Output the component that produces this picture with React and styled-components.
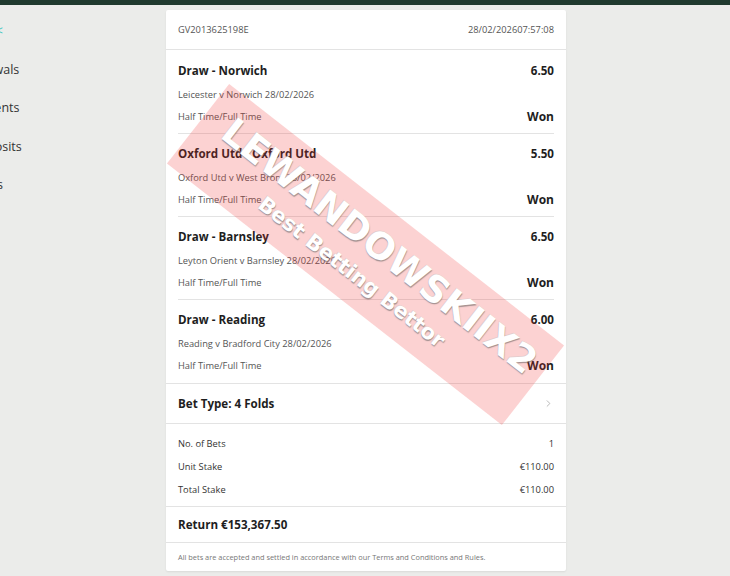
import React from "react";
import styled, { createGlobalStyle } from "styled-components";
import { ChevronRight } from "lucide-react";

const GlobalStyle = createGlobalStyle`
  html, body { margin: 0; padding: 0; }
  body {
    background: #ebecea;
    font-family: "Open Sans", "Noto Sans", sans-serif;
    color: #222;
    -webkit-font-smoothing: antialiased;
  }
`;

const TopBar = styled.div`
  height: 5px;
  background: #203a2f;
`;

const Layout = styled.div`
  display: flex;
  align-items: flex-start;
  min-height: 571px;
`;

const Sidebar = styled.nav`
  width: 166px;
  flex: none;
  overflow: hidden;
`;

const SideList = styled.ul`
  list-style: none;
  margin: 0 0 0 -58px;
  padding: 14px 0 0;
  display: flex;
  flex-direction: column;
`;

const SideItem = styled.li`
  height: 38.5px;
  line-height: 24px;
  font-size: 12.5px;
  white-space: nowrap;
  color: ${(p) => (p.$active ? "#3fc7c0" : "#333")};
  margin-left: ${(p) => p.$shift || 0}px;
`;

const Card = styled.main`
  position: relative;
  width: 400px;
  margin-top: 5px;
  background: #fff;
  border-radius: 2px;
  box-shadow: 0 1px 2px rgba(0, 0, 0, 0.08);
  overflow: hidden;
`;

const Header = styled.header`
  height: 39px;
  padding: 0 12px;
  display: flex;
  align-items: center;
  justify-content: space-between;
  font-size: 9.3px;
  color: #555;
  border-bottom: 1px solid #e3e3e3;
`;

const Selections = styled.section`
  padding: 0 12px;
  border-bottom: 1px solid #e3e3e3;
`;

const Selection = styled.div`
  padding: 12px 0 9px;
  border-bottom: 1px solid #e3e3e3;
  &:first-child {
    padding-top: 13px;
  }
  &:last-child {
    border-bottom: none;
    padding-bottom: 10px;
  }
`;

const Row = styled.div`
  display: flex;
  align-items: center;
  justify-content: space-between;
`;

const Title = styled.span`
  font-size: 11.6px;
  font-weight: 700;
  line-height: 16px;
  color: #1e1e1e;
`;

const Odds = styled.span`
  font-size: 11.6px;
  font-weight: 700;
  line-height: 16px;
  color: #1e1e1e;
`;

const Sub = styled.div`
  margin-top: 9px;
  font-size: 9.3px;
  line-height: 14px;
  color: #555;
`;

const Market = styled(Row)`
  margin-top: 6px;
  height: 16px;
`;

const MarketName = styled.span`
  font-size: 9.3px;
  color: #555;
`;

const Result = styled.span`
  font-size: 12px;
  font-weight: 700;
  color: #1e1e1e;
`;

const BetType = styled(Row)`
  height: 39px;
  padding: 0 12px;
  border-bottom: 1px solid #e3e3e3;
  color: #999;
`;

const Stakes = styled.section`
  padding: 8px 12px 5px;
  border-bottom: 1px solid #e3e3e3;
`;

const StakeRow = styled(Row)`
  height: 23px;
  font-size: 9.3px;
  color: #333;
`;

const Return = styled.div`
  height: 35px;
  padding: 0 12px;
  display: flex;
  align-items: center;
  border-bottom: 1px solid #e3e3e3;
`;

const Footer = styled.footer`
  height: 28px;
  padding: 0 12px;
  display: flex;
  align-items: center;
  font-size: 7.4px;
  color: #777;
`;

const Watermark = styled.div`
  position: absolute;
  left: -13px;
  top: 194px;
  width: 425px;
  height: 101px;
  transform: rotate(38deg);
  background: rgba(240, 50, 50, 0.22);
  pointer-events: none;
  display: flex;
  flex-direction: column;
  align-items: center;
  justify-content: center;
  font-family: "DejaVu Sans", sans-serif;
  font-weight: 700;
  color: #fff;
  text-shadow: 1px 1px 1px rgba(90, 90, 90, 0.55), -1px 0 0 rgba(200, 200, 200, 0.5);
`;

const MarkMain = styled.div`
  font-size: 37px;
  line-height: 40px;
  margin-left: 12px;
`;

const MarkSub = styled.div`
  font-size: 21px;
  line-height: 26px;
  margin-top: 4px;
`;

const selections = [
  { title: "Draw - Norwich", odds: "6.50", event: "Leicester v Norwich 28/02/2026" },
  { title: "Oxford Utd - Oxford Utd", odds: "5.50", event: "Oxford Utd v West Brom 28/02/2026" },
  { title: "Draw - Barnsley", odds: "6.50", event: "Leyton Orient v Barnsley 28/02/2026" },
  { title: "Draw - Reading", odds: "6.00", event: "Reading v Bradford City 28/02/2026" },
];

const stakes = [
  ["No. of Bets", "1"],
  ["Unit Stake", "€110.00"],
  ["Total Stake", "€110.00"],
];

export default function App() {
  return (
    <>
      <GlobalStyle />
      <TopBar />
      <Layout>
        <Sidebar>
          <SideList>
            <SideItem $active $shift={23}>Back &lt;</SideItem>
            <SideItem $shift={5}>Withdrawals</SideItem>
            <SideItem $shift={4}>Adjustments</SideItem>
            <SideItem $shift={29}>Deposits</SideItem>
            <SideItem $shift={11}>Bonuses</SideItem>
          </SideList>
        </Sidebar>
        <Card>
          <Header>
            <span>GV2013625198E</span>
            <span>28/02/202607:57:08</span>
          </Header>
          <Selections>
            {selections.map((s) => (
              <Selection key={s.event}>
                <Row>
                  <Title>{s.title}</Title>
                  <Odds>{s.odds}</Odds>
                </Row>
                <Sub>{s.event}</Sub>
                <Market>
                  <MarketName>Half Time/Full Time</MarketName>
                  <Result>Won</Result>
                </Market>
              </Selection>
            ))}
          </Selections>
          <BetType>
            <Title>Bet Type: 4 Folds</Title>
            <ChevronRight size={11} strokeWidth={1.5} />
          </BetType>
          <Stakes>
            {stakes.map(([k, v]) => (
              <StakeRow key={k}>
                <span>{k}</span>
                <span>{v}</span>
              </StakeRow>
            ))}
          </Stakes>
          <Return>
            <Title>Return €153,367.50</Title>
          </Return>
          <Footer>
            All bets are accepted and settled in accordance with our Terms and Conditions and Rules.
          </Footer>
          <Watermark>
            <MarkMain>LEWANDOWSKIIX2</MarkMain>
            <MarkSub>Best Betting Bettor</MarkSub>
          </Watermark>
        </Card>
      </Layout>
    </>
  );
}
